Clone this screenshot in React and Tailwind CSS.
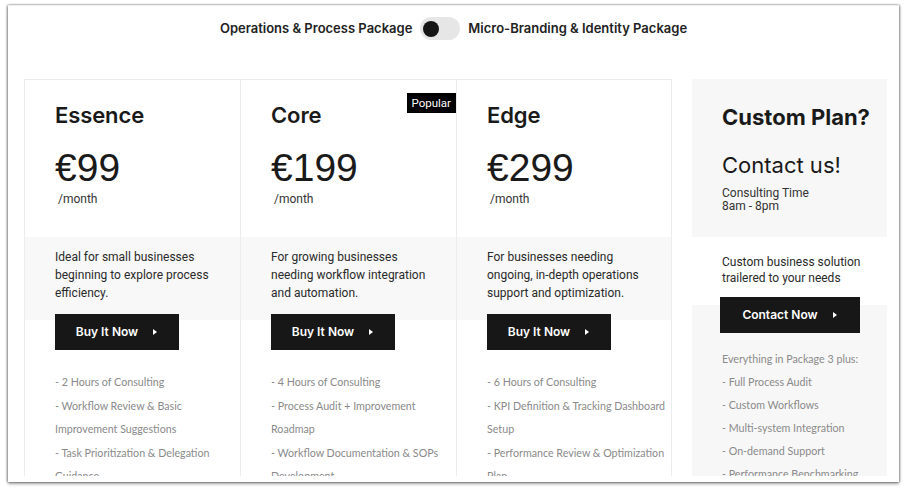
import React from "react";

const Caret = () => (
  <svg width="6" height="8" viewBox="0 0 6 8" className="ml-[14px]">
    <path d="M1 1 L5 4 L1 7 Z" fill="white" />
  </svg>
);

const plans = [
  {
    name: "Essence",
    price: "€99",
    desc: ["Ideal for small businesses", "beginning to explore process", "efficiency."],
    features: [
      "- 2 Hours of Consulting",
      "- Workflow Review & Basic",
      "Improvement Suggestions",
      "- Task Prioritization & Delegation",
      "Guidance",
    ],
  },
  {
    name: "Core",
    price: "€199",
    popular: true,
    desc: ["For growing businesses", "needing workflow integration", "and automation."],
    features: [
      "- 4 Hours of Consulting",
      "- Process Audit + Improvement",
      "Roadmap",
      "- Workflow Documentation & SOPs",
      "Development",
    ],
  },
  {
    name: "Edge",
    price: "€299",
    desc: ["For businesses needing", "ongoing, in-depth operations", "support and optimization."],
    features: [
      "- 6 Hours of Consulting",
      "- KPI Definition & Tracking Dashboard",
      "Setup",
      "- Performance Review & Optimization",
      "Plan",
    ],
  },
];

function Card({ plan, last }) {
  return (
    <div className={`relative w-[216px] shrink-0 flex flex-col border-l border-[#ececec] ${last ? "border-r" : ""}`}>
      <div className="h-[158px] shrink-0 border-t border-[#ececec] bg-white px-[30px] pt-[21px]">
        <div className="text-[22px] font-semibold leading-[28px] text-[#1a1a1a] [font-family:Inter,sans-serif] tracking-[-0.1px]">
          {plan.name}
        </div>
        <div className="mt-[17px] text-[39px] leading-[44px] text-[#1a1a1a] [font-family:'Liberation_Sans',Arial,sans-serif]">
          {plan.price}
        </div>
        <div className="mt-[1px] ml-[3px] text-[12px] leading-[16px] text-[#333] [font-family:Roboto,sans-serif]">
          /month
        </div>
      </div>
      <div className="h-[83px] shrink-0 bg-[#f8f8f8] px-[30px] pt-[11px]">
        {plan.desc.map((d) => (
          <div key={d} className="whitespace-nowrap text-[12px] leading-[18px] text-[#2a2a2a] [font-family:Roboto,sans-serif]">
            {d}
          </div>
        ))}
      </div>
      <div className="shrink-0 px-[30px]">
        <div className="-mt-[6px] flex h-[36px] w-[124px] items-center justify-center bg-[#171717] text-[12px] font-semibold text-white [font-family:Inter,sans-serif]">
          Buy It Now
          <Caret />
        </div>
        <div className="mt-[20px] flex flex-col">
          {plan.features.map((f) => (
            <div key={f} className="text-[10.7px] leading-[23.5px] text-[#8a8a8a] [font-family:Lato,sans-serif] whitespace-nowrap">
              {f}
            </div>
          ))}
        </div>
      </div>
      {plan.popular && (
        <div className="absolute right-0 top-[14px] bg-black px-[5px] text-[11.5px] leading-[20px] text-white [font-family:Roboto,sans-serif]">
          Popular
        </div>
      )}
    </div>
  );
}

export default function App() {
  return (
    <div className="h-[496px] w-[914px] bg-white pl-[8px] pt-[5px]">
      <div className="h-[477px] w-[891px] overflow-hidden border-t border-[#f0f0f0] bg-white shadow-[-1px_0_2px_rgba(0,0,0,0.35),1px_0_2px_rgba(0,0,0,0.35),0_2px_3px_rgba(0,0,0,0.35)]">
        <div className="flex h-[73px] items-start justify-center pt-[11px]">
          <div className="flex items-center gap-[8px] text-[13px] font-semibold text-[#222] [font-family:Inter,sans-serif]">
            <span>Operations &amp; Process Package</span>
            <div className="flex h-[23px] w-[40px] items-center rounded-full bg-[#e6e6e6] px-[3px]">
              <div className="h-[16px] w-[16px] rounded-full bg-[#151515]" />
            </div>
            <span>Micro-Branding &amp; Identity Package</span>
          </div>
        </div>
        <div className="flex h-[397px] items-start overflow-hidden pl-[16px]">
          {plans.map((p, i) => (
            <Card key={p.name} plan={p} last={i === 2} />
          ))}
          <div className="ml-[20px] h-[397px] w-[195px] flex flex-col">
            <div className="h-[158px] shrink-0 bg-[#f7f7f7] px-[30px] pt-[24px]">
              <div className="text-[22px] font-bold leading-[28px] text-[#1a1a1a] [font-family:Inter,sans-serif] whitespace-nowrap">
                Custom Plan?
              </div>
              <div className="mt-[20px] text-[22px] leading-[28px] text-[#1a1a1a] [font-family:Inter,sans-serif]">
                Contact us!
              </div>
              <div className="mt-[8px] text-[12px] leading-[12.5px] text-[#333] [font-family:Roboto,sans-serif]">
                Consulting Time
                <br />
                8am - 8pm
              </div>
            </div>
            <div className="h-[68px] shrink-0 bg-white px-[30px] pt-[17px]">
              <div className="whitespace-nowrap text-[12px] leading-[16px] text-[#2a2a2a] [font-family:Roboto,sans-serif]">
                Custom business solution
                <br />
                trailered to your needs
              </div>
            </div>
            <div className="flex-1 bg-[#f7f7f7] px-[28px]">
              <div className="-mt-[8px] flex h-[36px] w-[140px] items-center justify-center bg-[#171717] text-[12px] font-semibold text-white [font-family:Inter,sans-serif]">
                Contact Now
                <Caret />
              </div>
              <div className="mt-[14px] flex flex-col pl-[2px]">
                {[
                  "Everything in Package 3 plus:",
                  "- Full Process Audit",
                  "- Custom Workflows",
                  "- Multi-system Integration",
                  "- On-demand Support",
                  "- Performance Benchmarking",
                ].map((f) => (
                  <div key={f} className="text-[10.7px] leading-[23px] text-[#8a8a8a] [font-family:Lato,sans-serif] whitespace-nowrap">
                    {f}
                  </div>
                ))}
              </div>
            </div>
          </div>
        </div>
      </div>
    </div>
  );
}
